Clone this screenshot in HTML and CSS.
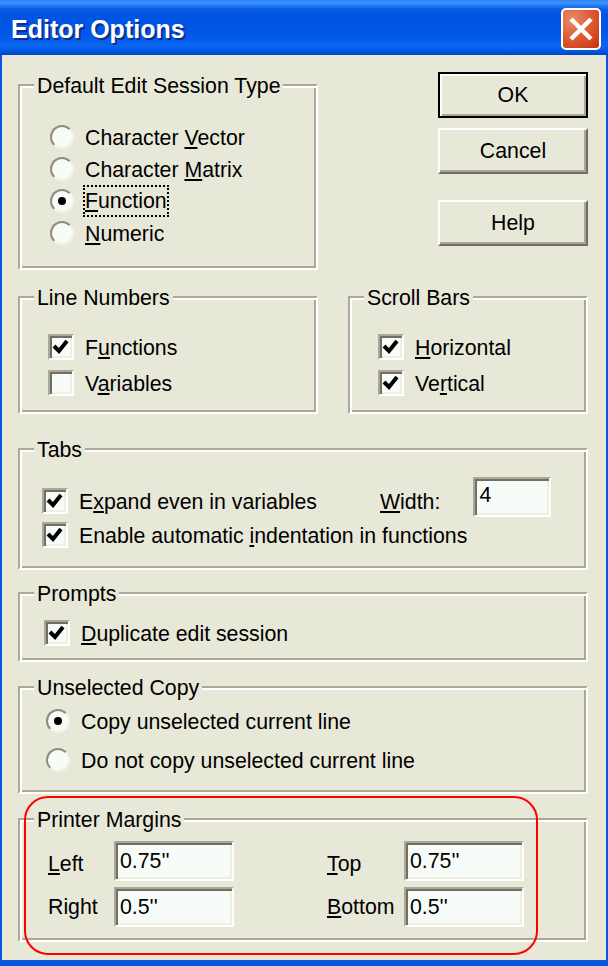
FILE: index.html
```html
<!DOCTYPE html>
<html lang="en">
<head>
    <meta charset="UTF-8">
    <meta name="viewport" content="width=device-width, initial-scale=1.0">
    <title>Editor Options</title>
    <link rel="stylesheet" href="styles.css">
</head>
<body>
    <div class="window">
        <div class="titlebar">
            <span class="title">Editor Options</span>
            <div class="close">
                <svg width="26" height="26" viewBox="0 0 26 26"><path d="M3 3L23 23M23 3L3 23" stroke="#fff" stroke-width="4.5" fill="none"/></svg>
            </div>
        </div>
        <div class="dialog">
            <div class="top-row">
                <div class="group session">
                    <div class="legend">Default Edit Session Type</div>
                    <div class="row"><span class="radio"></span><label>Character <u>V</u>ector</label></div>
                    <div class="row"><span class="radio"></span><label>Character <u>M</u>atrix</label></div>
                    <div class="row"><span class="radio on"></span><label class="focus"><u>F</u>unction</label></div>
                    <div class="row"><span class="radio"></span><label><u>N</u>umeric</label></div>
                </div>
                <div class="buttons">
                    <button class="btn default">OK</button>
                    <button class="btn">Cancel</button>
                    <button class="btn help">Help</button>
                </div>
            </div>

            <div class="mid-row">
                <div class="group lines">
                    <div class="legend">Line Numbers</div>
                    <div class="row"><span class="check"><svg width="18" height="18" viewBox="0 0 18 18"><path d="M2 8L7 13L15 3" stroke="#000" stroke-width="4" fill="none"/></svg></span><label>F<u>u</u>nctions</label></div>
                    <div class="row"><span class="check"></span><label>V<u>a</u>riables</label></div>
                </div>
                <div class="group scrolls">
                    <div class="legend">Scroll Bars</div>
                    <div class="row"><span class="check"><svg width="18" height="18" viewBox="0 0 18 18"><path d="M2 8L7 13L15 3" stroke="#000" stroke-width="4" fill="none"/></svg></span><label><u>H</u>orizontal</label></div>
                    <div class="row"><span class="check"><svg width="18" height="18" viewBox="0 0 18 18"><path d="M2 8L7 13L15 3" stroke="#000" stroke-width="4" fill="none"/></svg></span><label>Ve<u>r</u>tical</label></div>
                </div>
            </div>

            <div class="group tabs">
                <div class="legend">Tabs</div>
                <div class="row first"><span class="check"><svg width="18" height="18" viewBox="0 0 18 18"><path d="M2 8L7 13L15 3" stroke="#000" stroke-width="4" fill="none"/></svg></span><label>E<u>x</u>pand even in variables</label>
                    <div class="width-field"><label><u>W</u>idth:</label><input class="field small" value="4"></div>
                </div>
                <div class="row"><span class="check"><svg width="18" height="18" viewBox="0 0 18 18"><path d="M2 8L7 13L15 3" stroke="#000" stroke-width="4" fill="none"/></svg></span><label>Enable automatic <u>i</u>ndentation in functions</label></div>
            </div>

            <div class="group prompts">
                <div class="legend">Prompts</div>
                <div class="row"><span class="check"><svg width="18" height="18" viewBox="0 0 18 18"><path d="M2 8L7 13L15 3" stroke="#000" stroke-width="4" fill="none"/></svg></span><label><u>D</u>uplicate edit session</label></div>
            </div>

            <div class="group copy">
                <div class="legend">Unselected Copy</div>
                <div class="row"><span class="radio on"></span><label>Copy unselected current line</label></div>
                <div class="row"><span class="radio"></span><label>Do not copy unselected current line</label></div>
            </div>

            <div class="group margins">
                <div class="legend">Printer Margins</div>
                <div class="margin-grid">
                    <label class="m-left"><u>L</u>eft</label><input class="field" value="0.75''">
                    <label class="m-top"><u>T</u>op</label><input class="field" value="0.75''">
                    <label class="m-left low">Right</label><input class="field" value="0.5''">
                    <label class="m-top low"><u>B</u>ottom</label><input class="field" value="0.5''">
                </div>
            </div>
        </div>
        <div class="annotation"></div>
    </div>
</body>
</html>
```

FILE: styles.css
```css
html, body {
    margin: 0;
    padding: 0;
}
body {
    font-family: "Liberation Sans", Arial, sans-serif;
    font-size: 21.3px;
    color: #000;
    background: #e8e8d8;
}
.window {
    position: relative;
    width: 608px;
    height: 966px;
    box-sizing: border-box;
    display: flex;
    flex-direction: column;
    overflow: hidden;
}
.titlebar {
    height: 55px;
    flex: none;
    box-sizing: border-box;
    display: flex;
    align-items: center;
    justify-content: space-between;
    padding: 2px 7px 0 11px;
    background: linear-gradient(to bottom, #2f83f6 0, #3a93ff 3px, #0a5ce6 9px, #0054e3 16px, #0256e6 34px, #0a66f0 46px, #0559e4 50px, #0045c8 55px);
}
.title {
    margin-top: 2px;
    font-family: "Liberation Sans", Arial, sans-serif;
    font-size: 25px;
    font-weight: bold;
    color: #fff;
    text-shadow: 2px 2px 0 #0a2f8f;
}
.close {
    width: 40px;
    height: 42px;
    box-sizing: border-box;
    border: 2px solid #fff;
    border-radius: 5px;
    display: flex;
    align-items: center;
    justify-content: center;
    background: radial-gradient(circle at 25% 25%, #e88a68, #d9522b 60%, #c4330c);
}
.dialog {
    flex: 1;
    box-sizing: border-box;
    border: solid #0a55e0;
    border-width: 0 2px 6px 2px;
    padding: 17px 18px 0 16px;
}
.group {
    box-sizing: border-box;
    border: 2px solid;
    border-color: #aca899 #fff #fff #aca899;
    box-shadow: inset 2px 2px 0 #fff, inset -2px -2px 0 #aca899;
    padding: 0 0 0 28px;
}
.legend {
    width: fit-content;
    margin: -14px 0 0 -14px;
    padding: 0 3px;
    height: 28px;
    line-height: 28px;
    background: #e8e8d8;
}
.row {
    display: flex;
    align-items: center;
    height: 32px;
}
.row label {
    white-space: nowrap;
    padding-top: 2px;
}

.top-row {
    display: flex;
    align-items: flex-start;
}
.session {
    width: 300px;
    height: 186px;
    margin-top: 12px;
    padding-left: 30px;
}
.session .legend {
    margin-left: -16px;
    margin-bottom: 21px;
}
.buttons {
    margin-left: 120px;
    display: flex;
    flex-direction: column;
}
.btn {
    width: 150px;
    height: 46px;
    margin-bottom: 10px;
    padding: 0;
    font: inherit;
    color: #000;
    box-sizing: border-box;
    background: #e8e8d8;
    border: 2px solid;
    border-color: #fff #716f64 #716f64 #fff;
    box-shadow: inset -2px -2px 0 #aca899;
    border-radius: 0;
}
.btn.default {
    border-color: #000;
    box-shadow: inset 2px 2px 0 #fff, inset -2px -2px 0 #aca899;
}
.btn.help {
    margin-top: 16px;
}

.radio {
    width: 24px;
    height: 24px;
    margin-right: 11px;
    flex: none;
    box-sizing: border-box;
    border-radius: 50%;
    border: 2px solid;
    border-color: #8e8c7c #f4f2e8 #f4f2e8 #8e8c7c;
    background: #f8fcf8;
    display: flex;
    align-items: center;
    justify-content: center;
}
.radio.on::after {
    content: "";
    width: 8px;
    height: 8px;
    border-radius: 50%;
    background: #000;
}
.check {
    width: 26px;
    height: 26px;
    flex: none;
    margin-right: 11px;
    box-sizing: border-box;
    border: 2px solid;
    border-color: #aca899 #fff #fff #aca899;
    box-shadow: inset 2px 2px 0 #716f64, inset -2px -2px 0 #f1efe2;
    background: #f8fcf8;
    display: flex;
    align-items: center;
    justify-content: center;
}
.row label.focus {
    padding-top: 0;
    outline: 2px dotted #000;
    outline-offset: 0;
    line-height: 28px;
}

.mid-row {
    display: flex;
    gap: 30px;
    margin-top: 26px;
}
.lines {
    width: 300px;
    height: 118px;
}
.scrolls {
    width: 240px;
    height: 118px;
}
.lines .legend, .scrolls .legend {
    margin-bottom: 17px;
}
.lines .row, .scrolls .row {
    height: 36px;
}

.tabs {
    margin-top: 34px;
    height: 122px;
    padding-left: 22px;
}
.tabs .legend {
    margin-left: -8px;
    margin-bottom: 20px;
}
.tabs .row {
    height: 34px;
}
.width-field {
    margin-left: 63px;
    display: flex;
    align-items: center;
    gap: 33px;
    height: 34px;
}
.field {
    box-sizing: border-box;
    width: 120px;
    height: 40px;
    padding: 0 0 0 4px;
    font: inherit;
    color: #000;
    background: #f8fcf8;
    border: 2px solid;
    border-color: #aca899 #fff #fff #aca899;
    box-shadow: inset 2px 2px 0 #716f64, inset -2px -2px 0 #f1efe2;
    border-radius: 0;
    outline: none;
}
.field.small {
    width: 78px;
    margin-top: -8px;
    padding-bottom: 4px;
}

.prompts {
    margin-top: 22px;
    height: 70px;
    padding-left: 24px;
}
.prompts .legend {
    margin-left: -10px;
    margin-bottom: 9px;
}
.copy {
    margin-top: 24px;
    height: 108px;
    padding-left: 26px;
}
.copy .legend {
    margin-left: -12px;
    margin-bottom: -1px;
}
.copy .row {
    height: 39px;
}
.copy .row label {
    padding-top: 4px;
}
.margins {
    margin-top: 24px;
    height: 124px;
    padding-left: 0;
}
.margins .legend {
    margin-left: 14px;
    margin-bottom: 4px;
}
.margin-grid {
    display: grid;
    grid-template-columns: 94px 120px 170px 120px;
    grid-auto-rows: 46px;
    align-items: center;
}
.m-left {
    padding: 6px 0 0 28px;
}
.m-top {
    padding: 6px 0 0 93px;
    white-space: nowrap;
}
.m-left.low, .m-top.low {
    padding-top: 0;
}

/* red marker drawn over the screenshot */
.annotation {
    position: absolute;
    left: 24px;
    top: 796px;
    width: 514px;
    height: 159px;
    box-sizing: border-box;
    border: 2px solid #f00;
    border-radius: 24px;
}
```
